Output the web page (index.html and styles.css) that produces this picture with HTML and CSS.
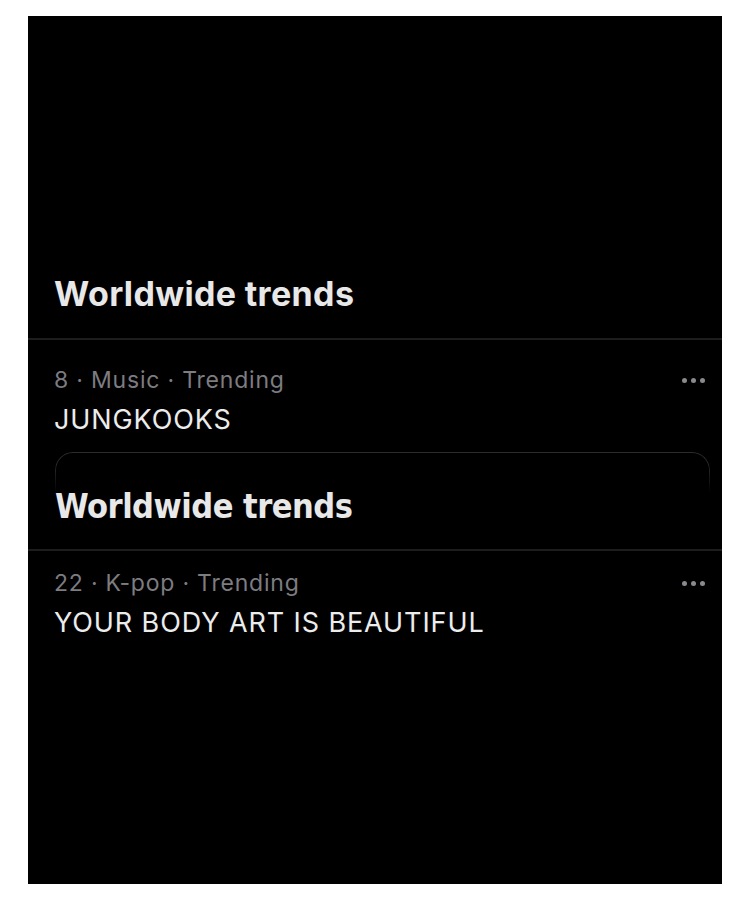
FILE: index.html
```html
<!DOCTYPE html>
<html lang="en">
<head>
  <meta charset="UTF-8">
  <title>Worldwide trends</title>
  <meta name="viewport" content="width=device-width, initial-scale=1.0">
  <link rel="stylesheet" href="styles.css">
</head>
<body>
  <div class="screen">
    <!-- First trends block -->
    <div class="section-head">
      <h2>Worldwide trends</h2>
    </div>
    <div class="trend">
      <div class="trend-text">
        <p class="meta">8 · Music · Trending</p>
        <p class="name">JUNGKOOKS</p>
      </div>
      <span class="more"><i></i><i></i><i></i></span>
    </div>

    <!-- Second block, sitting in a sheet with a rounded top -->
    <div class="sheet">
      <h2 class="condensed">Worldwide trends</h2>
    </div>
    <div class="trend trend-second">
      <div class="trend-text">
        <p class="meta">22 · K-pop · Trending</p>
        <p class="name">YOUR BODY ART IS BEAUTIFUL</p>
      </div>
      <span class="more"><i></i><i></i><i></i></span>
    </div>
  </div>
</body>
</html>
```

FILE: styles.css
```css
* {
  box-sizing: border-box;
}

body {
  margin: 0;
  background: #fff;
  font-family: Inter, "Liberation Sans", sans-serif;
}

.screen {
  margin: 16px 28px;
  height: 868px;
  background: #000;
  padding-top: 258px;
  overflow: hidden;
}

h2 {
  margin: 0;
  font-size: 34px;
  line-height: 40px;
  font-weight: 700;
  color: #e8e8e8;
  letter-spacing: 0.35px;
}

.section-head {
  padding: 0 0 24px 26px;
  border-bottom: 2px solid #1d1d20;
}

.trend {
  display: flex;
  justify-content: space-between;
  align-items: flex-start;
  padding: 26px 17px 17px 26px;
}

.trend p {
  margin: 0;
}

.meta {
  font-size: 23px;
  line-height: 28px;
  color: #7c7c81;
  letter-spacing: 0.8px;
}

.name {
  margin-top: 11px !important;
  font-size: 27px;
  line-height: 30px;
  color: #ececec;
  letter-spacing: 0.9px;
}

.more {
  display: flex;
  gap: 4px;
  margin-top: 12px;
}

.more i {
  width: 5px;
  height: 5px;
  border-radius: 50%;
  background: #8a8a8e;
}

.sheet {
  position: relative;
  margin: 0 12px 0 27px;
  padding: 34px 0 23px;
}

/* outline of the sheet, fading out down the sides */
.sheet::before {
  content: "";
  position: absolute;
  left: 0;
  right: 0;
  top: 0;
  height: 40px;
  border: 1px solid #2c2c2f;
  border-bottom: none;
  border-radius: 18px 18px 0 0;
  -webkit-mask-image: linear-gradient(#000 30%, transparent);
  mask-image: linear-gradient(#000 30%, transparent);
}

.condensed {
  font-family: "DejaVu Sans", sans-serif;
  font-stretch: condensed;
  font-size: 34px;
  letter-spacing: -0.5px;
}

.trend-second {
  border-top: 2px solid #1d1d20;
  padding-top: 18px;
}
```
